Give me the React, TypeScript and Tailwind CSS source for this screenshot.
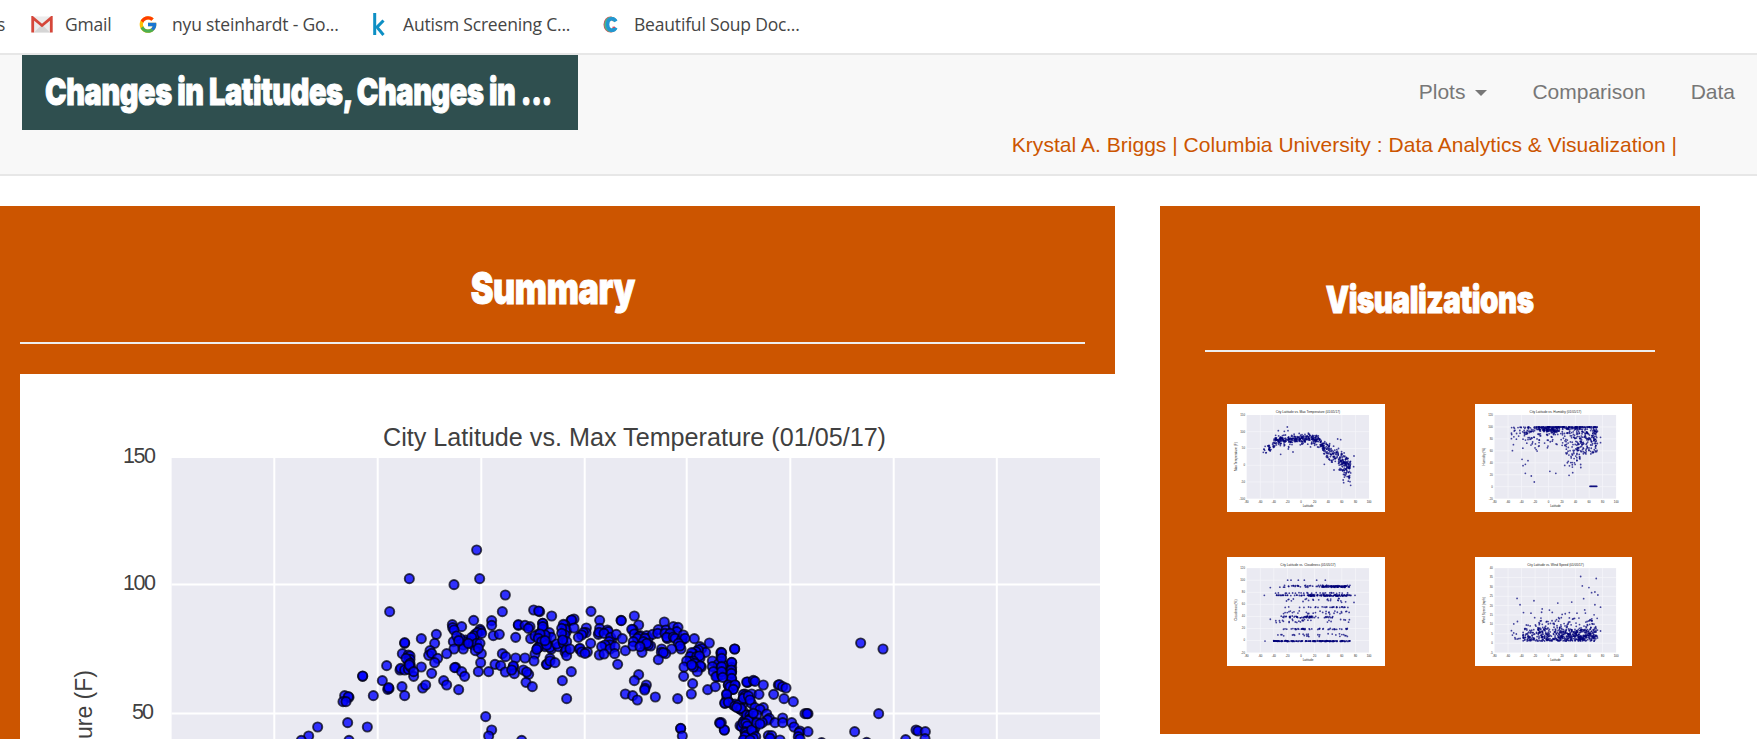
import React from "react";
import { FcGoogle } from "react-icons/fc";

/* City samples as x,y pairs, in thirds of a pixel from each tile's origin. */
const WEST =
  "590,60 388,146 522,164 599,146 676,195 667,245 329,245 761,240 779,245 776,243 581,271 635,272 635,286 517,284 545,290 518,293 522,300 469,313 424,326 374,340 374,338 464,340 520,335 600,298 602,303 585,313 592,308 583,318 605,310 557,330 552,335 550,345 550,357 540,325 530,318 536,332 570,335 575,322 580,345 590,340 600,340 565,340 640,317 658,313 707,322 715,286 715,284 735,286 750,290 745,295 752,326 788,280 788,300 790,290 775,312 765,318 785,330 800,320 772,355 778,350 765,372 795,350 800,335 762,393 735,384 707,384 667,371 677,380 645,403 662,407 676,426 700,411 700,408 703,431 695,420 730,420 746,433 740,426 738,457 757,470 799,403 602,398 604,371 586,362 595,355 522,357 500,371 450,362 446,376 455,370 473,385 464,398 455,430 424,411 367,371 385,375 390,378 390,388 385,395 378,385 390,400 360,420 362,415 374,420 385,418 392,411 388,405 401,439 401,425 320,407 307,452 327,476 323,478 326,473 366,470 374,497 428,474 437,465 491,452 500,465 527,412 524,413 545,425 554,439 536,479 595,425 626,425 248,439 248,438 280,497 194,497 207,502 205,500 189,515 198,515 203,578 262,591 113,591 86,618 64,631 207,631 617,560 635,600 626,618 725,631";
const MID =
  "65,258 183,244 209,271 273,271 274,272 313,258 326,285 132,267 123,271 125,270 105,285 100,283 110,303 107,298 95,295 132,294 100,322 105,315 95,310 169,294 168,308 160,308 155,315 145,322 38,280 38,298 38,290 58,308 64,322 45,315 30,312 25,325 35,335 24,353 20,358 64,357 60,352 50,345 45,332 85,350 80,342 100,340 110,335 98,330 105,366 108,360 110,377 120,357 148,357 150,355 155,366 172,366 165,370 182,340 209,295 205,313 207,307 232,300 235,305 222,310 245,330 242,322 237,335 240,345 259,313 277,326 225,345 215,350 240,357 255,350 208,375 222,372 254,371 263,403 286,362 60,385 51,403 60,393 75,398 124,425 97,452 110,506 309,299 305,298 313,312 331,317 328,320 322,325 350,317 355,325 368,313 345,325 340,335 310,335 309,348 345,348 362,348 355,345 336,367 350,340 330,350 403,276 385,299 383,310 408,300 405,310 430,290 444,292 440,305 420,310 412,326 410,322 430,321 435,325 457,330 455,328 460,315 465,325 445,340 453,357 450,348 425,357 395,357 394,367 407,371 400,368 385,389 493,326 538,339 510,350 515,356 527,367 505,360 498,365 489,371 485,368 480,380 500,380 510,385 508,378 490,393 480,395 470,393 495,400 462,411 461,439 488,461 484,492 443,506 497,411 514,411 511,408 502,425 490,411 485,405 573,367 573,370 573,380 547,393 573,395 565,402 547,410 573,412 580,405 550,425 565,438 562,440 558,440 575,435 605,398 614,357 605,412 605,425 603,427 600,440 605,450 605,465 615,465 595,465 600,475 609,478 533,479 556,470 590,492 590,506 596,515 592,512 585,520 610,525 615,522 620,530 625,527 630,537 628,535 640,520 645,492 640,506 638,510 652,457 326,434 313,452 349,465 345,475 344,480 286,492 308,497 322,510 376,501 569,578 583,600 452,596 452,595 457,618 640,545 655,555 645,570 640,575 635,588 645,600 648,605 650,615 645,625";
const EAST =
  "44,177 35,217 5,188 5,205 5,230 5,245 34,240 34,250 35,265 8,262 25,285 30,290 45,285 40,298 20,313 14,339 25,337 45,348 55,345 61,357 63,355 50,352 70,313 75,318 70,325 84,276 80,276 100,271 105,274 95,312 85,318 117,313 130,285 94,340 90,330 105,353 130,353 120,358 161,313 175,285 178,284 188,290 198,294 192,326 220,335 255,371 264,371 261,371 422,159 489,177 476,371 404,425 588,420 594,423 616,425 557,449 615,446 305,458 440,457 80,375 90,376 94,384 90,388 85,392 110,375 100,370 140,372 148,385 143,390 165,398 188,384 188,398 215,398 222,411 240,423 237,428 264,425 235,440 60,407 65,410 70,400 77,400 82,408 75,425 78,428 80,435 75,440 105,415 100,425 95,420 107,440 100,445 110,398 127,398 120,402 145,437 155,437 180,450 4,398 13,420 150,445 0,400 70,450 90,450 240,447";

type Point = [number, number];

const parse = (list: string, ox: number, oy: number): Point[] =>
  list.split(" ").map((pair) => {
    const [x, y] = pair.split(",").map(Number);
    return [ox + x / 3, oy + y / 3];
  });

const MAIN_POINTS: Point[] = [...parse(WEST, 260, 156), ...parse(MID, 510, 156), ...parse(EAST, 700, 216)];

function MainChart() {
  const verticals = [254.3, 357.7, 461.3, 564.7, 666.7, 770.3, 873.7, 976.8];
  return (
    <svg className="block h-[365px] w-[1095px] bg-white" viewBox="0 0 1095 365">
      <rect x="151.6" y="84" width="928.4" height="300" fill="#eaeaf2" />
      {verticals.map((x) => (
        <rect key={x} x={x - 1} y="84" width="2" height="300" fill="#fff" />
      ))}
      <rect x="151.6" y="209.5" width="928.4" height="2" fill="#fff" />
      <rect x="151.6" y="338.5" width="928.4" height="2" fill="#fff" />
      <g fill="#0000ff" fillOpacity="0.8" stroke="#000010" strokeOpacity="0.75" strokeWidth="1.9">
        {MAIN_POINTS.map(([x, y], i) => (
          <circle key={i} cx={x} cy={y} r="4.6" />
        ))}
      </g>
      <g fontFamily="'Liberation Sans', Arial, sans-serif" fill="#404040">
        <text x="363" y="72" fontSize="25" textLength="503" lengthAdjust="spacingAndGlyphs">
          City Latitude vs. Max Temperature (01/05/17)
        </text>
        <g fontSize="21.5" textAnchor="end">
          <text x="136" y="88.500" textLength="33">150</text>
          <text x="136" y="216" textLength="33">100</text>
          <text x="134" y="344.500" textLength="22">50</text>
        </g>
        <text transform="translate(72 296) rotate(-90)" fontSize="23" textAnchor="end">
          Max Temperature (F)
        </text>
      </g>
    </svg>
  );
}

function random(seed: number) {
  let s = seed;
  return () => {
    s = (s * 1103515245 + 12345) % 2147483648;
    return s / 2147483648;
  };
}

/* Latitudes cluster between the tropics and the northern mid-latitudes. */
function longX(r: () => number) {
  const u = r();
  if (u < 0.04) return 110 + r() * 40;
  if (u < 0.45) return 145 + r() * 95;
  return 240 + r() * 130;
}

function temperature(): Point[] {
  const r = random(7);
  const curve = [[108, 143], [130, 130], [150, 110], [180, 105], [215, 103], [250, 102], [275, 110], [295, 138], [320, 152], [345, 168], [371, 185]];
  const out: Point[] = [[181, 69], [154, 80], [172, 82], [183, 80], [146, 94], [332, 105], [341, 107], [381, 156], [380, 188], [161, 151], [292, 181], [321, 198], [184, 135], [198, 144], [371, 244], [369, 233], [350, 236], [109, 145], [113, 139]];
  for (let i = 0; i < 500; i++) {
    const x = i < 14 ? 125 + r() * 20 : longX(r);
    const k = Math.max(0, curve.findIndex((p) => p[0] > x) - 1);
    const a = curve[k];
    const b = curve[k + 1];
    const y = a[1] + ((b[1] - a[1]) * (x - a[0])) / (b[0] - a[0]);
    const spread = x > 290 ? 30 : 16;
    out.push([x, y + (r() + r() - 1) * spread]);
  }
  for (let i = 0; i < 45; i++) out.push([335 + r() * 36, 170 + r() * 40]);
  for (let i = 0; i < 18; i++) out.push([348 + r() * 20, 200 + r() * 33]);
  for (let i = 0; i < 18; i++) out.push([160 + r() * 120, 118 + r() * 12]);
  return out;
}

function humidity(): Point[] {
  const r = random(21);
  const out: Point[] = [[110, 104], [113, 140], [116, 122], [179, 234], [170, 216], [152, 208], [142, 166], [226, 202], [244, 208], [284, 214], [295, 206], [379, 116], [379, 100], [152, 181], [160, 170], [145, 185]];
  for (let i = 0; i < 70; i++) out.push([165 + r() * 200, 69]);
  for (let i = 0; i < 330; i++) out.push([longX(r), 69 + r() * r() * 78]);
  for (let i = 0; i < 70; i++) out.push([190 + r() * 60, 69 + r() * 14]);
  for (let i = 0; i < 60; i++) out.push([270 + r() * 50, 110 + r() * 82]);
  for (let i = 0; i < 90; i++) out.push([310 + r() * 60, 80 + r() * 70]);
  for (let i = 0; i < 12; i++) out.push([347 + i * 1.9, 247]);
  return out;
}

function cloudiness(): Point[] {
  const r = random(35);
  const out: Point[] = [[130, 91], [112, 114], [130, 185], [114, 250], [381, 135], [182, 69], [192, 69], [214, 69], [232, 69], [269, 69], [295, 69], [384, 114]];
  const band = (n: number, x0: number, x1: number, y: number, jitter: number) => {
    for (let i = 0; i < n; i++) out.push([x0 + r() * (x1 - x0), y + (r() - 0.5) * jitter]);
  };
  band(60, 150, 370, 87, 6);
  band(60, 285, 360, 88, 4);
  band(70, 145, 375, 114, 2);
  band(60, 250, 365, 114, 5);
  band(26, 145, 370, 107, 2);
  band(24, 145, 360, 129, 12);
  band(28, 165, 370, 149, 2);
  band(30, 165, 370, 165, 10);
  band(60, 160, 320, 178, 6);
  band(28, 145, 370, 190, 10);
  band(44, 165, 370, 214, 3);
  band(28, 145, 370, 233, 10);
  band(150, 140, 370, 250, 2);
  return out;
}

function wind(): Point[] {
  const r = random(52);
  const out: Point[] = [[319, 58], [366, 64], [324, 86], [344, 91], [362, 104], [352, 106], [371, 113], [127, 123], [178, 130], [136, 142], [250, 137], [292, 134], [328, 124], [362, 142], [379, 149], [379, 220], [110, 219], [113, 232], [117, 199], [136, 242]];
  for (let i = 0; i < 380; i++) out.push([longX(r), 250 - r() * r() * 105]);
  for (let i = 0; i < 200; i++) out.push([255 + r() * 112, 247 - r() * 32]);
  for (let i = 0; i < 50; i++) out.push([190 + r() * 35, 248 - r() * 40]);
  return out;
}

interface PlotProps {
  title: string;
  yLabel: string;
  yTicks: string[];
  points: Point[];
}

function Thumb({ title, yLabel, yTicks, points }: PlotProps) {
  const step = 251 / (yTicks.length - 1);
  return (
    <svg className="block h-full w-full bg-white" viewBox="0 0 474 324" preserveAspectRatio="none">
      <rect x="59" y="33" width="367" height="251" fill="#eaeaf2" />
      {[1, 2, 3, 4, 5, 6, 7, 8].map((i) => (
        <rect key={i} x={58 + i * 40.8} y="33" width="2" height="251" fill="#f6f6fa" />
      ))}
      {yTicks.map((t, i) => (
        <g key={t}>
          {i > 0 && i < yTicks.length - 1 && <rect x="59" y={32 + i * step} width="367" height="2" fill="#f6f6fa" />}
          <text x="54" y={36 + i * step} fontSize="8.5" textAnchor="end" fill="#333">{t}</text>
        </g>
      ))}
      <g fill="#000078" fillOpacity="0.72">
        {points.map(([x, y], i) => (
          <circle key={i} cx={x} cy={y} r="2.7" />
        ))}
      </g>
      <g fontFamily="'Liberation Sans', Arial, sans-serif" fill="#222">
        <text x="243" y="28" fontSize="9.7" textAnchor="middle">{title}</text>
        {[-80, -60, -40, -20, 0, 20, 40, 60, 80, 100].map((v, i) => (
          <text key={v} x={59 + i * 40.8} y="296" fontSize="8.5" textAnchor="middle">{v}</text>
        ))}
        <text x="243" y="308" fontSize="9" textAnchor="middle">Latitude</text>
        <text transform="translate(29 158) rotate(-90)" fontSize="9.3" textAnchor="middle">{yLabel}</text>
      </g>
    </svg>
  );
}

function GmailIcon() {
  return (
    <svg className="h-[17px] w-[22px]" viewBox="0 0 22 17">
      <rect x="1" y="0.5" width="20" height="16" rx="1" fill="#ececec" />
      <path d="M3 16.500 11 8.500l8 8z" fill="#d5d5d5" />
      <path d="M1.700 16.500V1.700L11 9.500l9.300-7.800v14.800" fill="none" stroke="#d5473a" strokeWidth="2.800" />
    </svg>
  );
}

function KIcon() {
  return (
    <svg className="h-[23px] w-3" viewBox="0 0 12 23" fill="none" stroke="#0d8fc4">
      <path d="M1.700 0v22" strokeWidth="3" />
      <path d="M10.500 7.500 4 14.200l6.500 7.800" strokeWidth="3" />
    </svg>
  );
}

function CIcon() {
  return (
    <svg className="h-[17px] w-4" viewBox="0 0 16 17" fill="none">
      <path d="M12.500 4.500A5.200 6.300 0 1 0 12.500 12.500" stroke="#d8455a" strokeWidth="3.600" />
      <path d="M13.300 4.800A5.200 6 0 1 0 13.300 12.200" stroke="#4bb58a" strokeWidth="3.600" />
      <path d="M14 5.300C11.500 0.800 5.600 2.400 5.600 8.500s5.900 7.700 8.400 3.200" stroke="#2296d2" strokeWidth="3.400" />
      <path d="M10.500 11.300h2.500" stroke="#d8455a" strokeWidth="1.300" />
    </svg>
  );
}

function Bookmark({ icon, label, className }: { icon: React.ReactNode; label: string; className: string }) {
  return (
    <div className={`flex shrink-0 items-center whitespace-nowrap ${className}`}>
      {icon}
      <span>{label}</span>
    </div>
  );
}

export default function App() {
  return (
    <div className="h-[739px] w-[1757px] overflow-hidden bg-white font-['Liberation_Sans',Arial,sans-serif]">
      <div className="flex h-[53px] items-center pb-[4px] font-['Open_Sans','Noto_Sans',sans-serif] text-[17.5px] tracking-[-0.18px] text-[#454545]">
        <span className="-ml-[3px] w-[34px] shrink-0">s</span>
        <Bookmark className="w-[107px] gap-[12px]" icon={<GmailIcon />} label="Gmail" />
        <Bookmark className="w-[235px] gap-[14px]" icon={<FcGoogle className="h-[21px] w-5" />} label="nyu steinhardt - Go..." />
        <Bookmark className="w-[229px] gap-[18px]" icon={<KIcon />} label="Autism Screening C..." />
        <Bookmark className="gap-[16px]" icon={<CIcon />} label="Beautiful Soup Doc..." />
      </div>

      <nav className="flex h-[123px] items-start justify-between border-y-2 border-[#e7e7e7] bg-[#f8f8f8] pl-[22px]">
        <div className="flex h-[75px] w-[556px] items-center overflow-hidden bg-[#2f4f4f] pl-[23px]">
          <span className="origin-left scale-x-[0.77] whitespace-nowrap font-['Inter'] text-[37.5px] font-black tracking-[-0.5px] text-white [-webkit-text-stroke:1px_white]">
            Changes in Latitudes, Changes in ...
          </span>
        </div>
        <div className="flex flex-col items-end text-[21px]">
          <div className="flex h-[75px] items-center gap-[45px] pb-[2px] pr-[22px] text-[#777]">
            <span className="flex items-center gap-[10px]">
              Plots
              <span className="mt-[3px] border-x-[6px] border-t-[6px] border-x-transparent border-t-[#777]" />
            </span>
            <span>Comparison</span>
            <span>Data</span>
          </div>
          <div className="pr-[80px] leading-[30px] tracking-[0.03px] text-[#cc5500]">
            Krystal A. Briggs | Columbia University : Data Analytics &amp; Visualization |
          </div>
        </div>
      </nav>

      <main className="flex items-start gap-[45px] pt-[30px]">
        <section className="h-[533px] w-[1115px] shrink-0 bg-[linear-gradient(to_right,#cc5500_20px,white_20px)]">
          <div className="flex h-[168px] flex-col items-center bg-[#cc5500] pl-5 pr-[30px]">
            <h1 className="flex h-[136px] items-center pt-[28px]">
              <span className="scale-x-[0.776] whitespace-nowrap font-['Inter'] text-[44px] font-black tracking-[-0.5px] text-white [-webkit-text-stroke:1px_white]">Summary</span>
            </h1>
            <hr className="w-full border-t-2 border-[#eee]" />
          </div>
          <div className="pl-5">
            <MainChart />
          </div>
        </section>

        <section className="h-[528px] w-[540px] shrink-0 bg-[#cc5500] px-[45px]">
          <h2 className="flex h-[144px] items-center justify-center pt-[44px]">
            <span className="scale-x-[0.784] whitespace-nowrap font-['Inter'] text-[37.5px] font-black tracking-[-0.5px] text-white [-webkit-text-stroke:1px_white]">Visualizations</span>
          </h2>
          <hr className="border-t-2 border-[#eee]" />
          <div className="grid grid-cols-[158px_157px] grid-rows-[108px_109px] gap-x-[90px] gap-y-[45px] pl-[22px] pt-[52px]">
            <Thumb title="City Latitude vs. Max Temperature (01/05/17)" yLabel="Max Temperature (F)" yTicks={["150", "100", "50", "0", "-50", "-100"]} points={temperature()} />
            <Thumb title="City Latitude vs. Humidity (01/05/17)" yLabel="Humidity (%)" yTicks={["120", "100", "80", "60", "40", "20", "0", "-20"]} points={humidity()} />
            <Thumb title="City Latitude vs. Cloudiness (01/05/17)" yLabel="Cloudiness (%)" yTicks={["120", "100", "80", "60", "40", "20", "0", "-20"]} points={cloudiness()} />
            <Thumb title="City Latitude vs. Wind Speed (01/05/17)" yLabel="Wind Speed (mph)" yTicks={["40", "35", "30", "25", "20", "15", "10", "5", "0", "-5"]} points={wind()} />
          </div>
        </section>
      </main>
    </div>
  );
}
